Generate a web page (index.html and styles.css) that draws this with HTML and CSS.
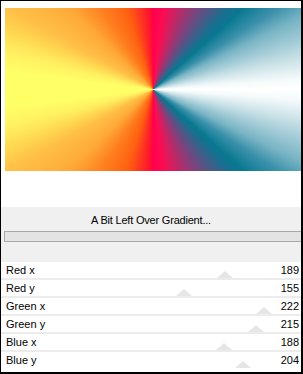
FILE: index.html
```html
<!DOCTYPE html>
<html lang="en">
<head>
    <meta charset="UTF-8">
    <meta name="viewport" content="width=device-width, initial-scale=1.0">
    <title>Gradient</title>
    <link rel="stylesheet" href="styles.css">
</head>
<body>
    <div class="frame">
        <div class="preview"></div>
        <div class="spacer"></div>
        <div class="panel">
            <div class="panel-title">A Bit Left Over Gradient...</div>
            <div class="progress"></div>
        </div>
        <div class="params">
            <div class="row" style="--v: 189"><span>Red x</span><span>189</span><i class="thumb"></i></div>
            <div class="row" style="--v: 155"><span>Red y</span><span>155</span><i class="thumb"></i></div>
            <div class="row" style="--v: 222"><span>Green x</span><span>222</span><i class="thumb"></i></div>
            <div class="row" style="--v: 215"><span>Green y</span><span>215</span><i class="thumb"></i></div>
            <div class="row" style="--v: 188"><span>Blue x</span><span>188</span><i class="thumb"></i></div>
            <div class="row last" style="--v: 204"><span>Blue y</span><span>204</span><i class="thumb"></i></div>
        </div>
    </div>
</body>
</html>
```

FILE: styles.css
```css
html, body {
    margin: 0;
    padding: 0;
    background: #fff;
}
body {
    font-family: "Liberation Sans", Arial, sans-serif;
    font-size: 11px;
    color: #000;
}
.frame {
    box-sizing: border-box;
    width: 303px;
    height: 374px;
    border-top: 1px solid #000;
    border-left: 1px solid #000;
    border-right: 2px solid #000;
    border-bottom: 2px solid #000;
    display: flex;
    flex-direction: column;
}
.preview {
    margin: 7px 0 0 4px;
    height: 163px;
    background: conic-gradient(from 0deg at 50% 50%,
        #ff0050 0deg, #ff0a50 7deg, #d02060 15deg, #704880 30deg,
        #1a6f90 43deg, #087890 48deg, #3a90aa 57deg, #78b4c4 64deg,
        #a0cad5 71deg, #d0e5ea 79deg, #f5fafb 86deg, #ffffff 90deg,
        #f5fafb 94deg, #d0e5ea 101deg, #a0cad5 109deg, #78b4c4 116deg,
        #3a90aa 123deg, #087890 132deg, #1a6f90 137deg, #704880 150deg,
        #d02060 165deg, #ff0a50 173deg, #ff0050 180deg,
        #ff1030 182deg, #ff6010 198deg, #ff8020 213deg, #ffa838 226deg,
        #ffc048 241deg, #ffd850 248deg, #ffef60 255deg, #ffff66 263deg,
        #ffff66 277deg, #ffef60 285deg, #ffd850 292deg, #ffc048 299deg,
        #ffa838 314deg, #ff8020 327deg, #ff6010 342deg, #ff1030 358deg,
        #ff0050 360deg);
}
.spacer {
    height: 36px;
}
.panel {
    background: #f0f0f0;
    height: 55px;
    display: flex;
    flex-direction: column;
}
.panel-title {
    text-align: center;
    height: 24px;
    line-height: 26px;
    letter-spacing: -0.2px;
}
.progress {
    margin-left: 3px;
    height: 9px;
    background: #e3e3e3;
    border: 1px solid #a8a8a8;
    border-right: 0;
}
.params {
    flex: 1;
    display: flex;
    flex-direction: column;
}
.row {
    position: relative;
    box-sizing: border-box;
    height: 18px;
    border-bottom: 2px solid #ececec;
    display: flex;
    justify-content: space-between;
    align-items: flex-start;
    padding: 1px 2px 0 5px;
    line-height: 15px;
}
.row.last {
    flex: 1;
    border-bottom: 0;
}
.row span {
    position: relative;
    z-index: 1;
}
.thumb {
    position: absolute;
    top: 9px;
    left: calc(var(--v) * 1.19px - 9px);
    width: 0;
    height: 0;
    border-left: 8px solid transparent;
    border-right: 8px solid transparent;
    border-bottom: 7px solid #e6e6e6;
}
```
